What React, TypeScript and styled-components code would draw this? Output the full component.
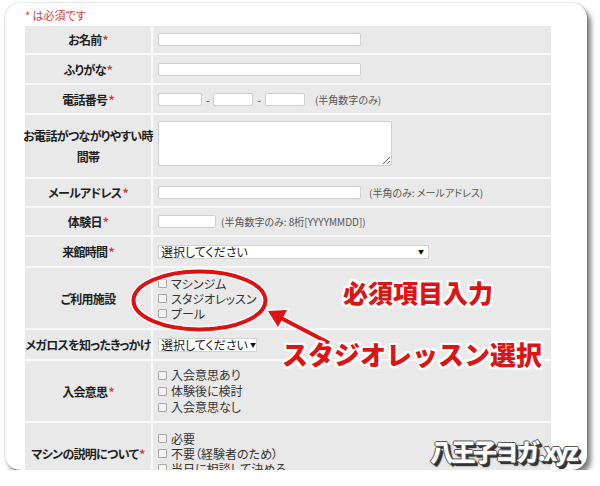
import styled, { createGlobalStyle } from 'styled-components';

const GlobalStyle = createGlobalStyle`
  html, body {
    margin: 0;
    padding: 0;
    background: #fff;
  }
  body {
    font-family: "Noto Sans CJK JP", "Liberation Sans", sans-serif;
    font-feature-settings: "palt";
    color: #333;
  }
`;

const Card = styled.div`
  position: relative;
  margin: 3px 0 0 5px;
  width: 582px;
  height: 467px;
  background: #fff;
  border-radius: 15px;
  overflow: hidden;
  box-shadow: 0 0 2px rgba(0, 0, 0, 0.3), 4px 5px 5px rgba(0, 0, 0, 0.5);
`;

const Inner = styled.div`
  padding: 4px 0 0 20px;
`;

const Note = styled.div`
  color: #d9413c;
  font-size: 11px;
  line-height: 16px;
  height: 19px;
`;

const FormTable = styled.div`
  width: 526px;
  background: #e9e9e9;
`;

const Row = styled.div<{ $h: number }>`
  display: grid;
  grid-template-columns: 128px 1fr;
  height: ${p => p.$h}px;
  box-sizing: border-box;
  border-bottom: 2px solid #f9f9f9;
`;

const Label = styled.div`
  display: flex;
  align-items: center;
  justify-content: center;
  text-align: center;
  border-right: 2px solid #f9f9f9;
  font-size: 12px;
  font-weight: bold;
  letter-spacing: -0.7px;
  line-height: 21px;
  color: #1e1e1e;
  white-space: nowrap;
`;

const Req = styled.span`
  color: #d63a3a;
  margin-left: 1px;
`;

const Cell = styled.div`
  display: flex;
  align-items: center;
  padding-left: 5px;
  font-size: 12px;
`;

const TextInput = styled.input<{ $w: number }>`
  width: ${p => p.$w}px;
  height: 13px;
  box-sizing: border-box;
  border: 1px solid #cfcfcf;
  border-radius: 2px;
  background: #fff;
  padding: 0;
  margin: 0;
`;

const Dash = styled.span`
  font-size: 10px;
  color: #444;
  margin: 0 4px;
`;

const Hint = styled.span<{ $gap: number }>`
  font-size: 10px;
  color: #555;
  margin-left: ${p => p.$gap}px;
  white-space: nowrap;
`;

const TextArea = styled.textarea`
  width: 234px;
  height: 45px;
  box-sizing: border-box;
  border: 1px solid #cfcfcf;
  border-radius: 2px;
  background: #fff;
  margin: 0 0 5px 0;
  padding: 0;
`;

const Select = styled.div<{ $w: number; $spread: boolean }>`
  width: ${p => p.$w}px;
  height: 14px;
  box-sizing: border-box;
  display: flex;
  align-items: center;
  justify-content: ${p => (p.$spread ? 'space-between' : 'flex-start')};
  gap: 2px;
  padding: 0 4px 0 2px;
  border: 1px solid #d4d4d4;
  background: #fff;
  font-size: 12px;
  line-height: 12px;
  color: #222;
  white-space: nowrap;
`;

const Caret = styled.span`
  font-size: 6px;
  color: #111;
`;

const Checks = styled.div<{ $lh: number }>`
  display: flex;
  flex-direction: column;
  line-height: ${p => p.$lh}px;
  font-size: 12px;
  color: #333;
`;

const Check = styled.label`
  display: flex;
  align-items: center;
  gap: 4px;
  white-space: nowrap;

  &::before {
    content: '';
    width: 7px;
    height: 7px;
    border: 1px solid #a8a8a8;
    border-radius: 1px;
    background: #f4f4f4;
  }
`;

const Overlay = styled.svg`
  position: absolute;
  left: 0;
  top: 0;
  pointer-events: none;
`;

const Callout = styled.div<{ $x: number; $y: number; $size: number }>`
  position: absolute;
  left: ${p => p.$x}px;
  top: ${p => p.$y}px;
  font-size: ${p => p.$size}px;
  line-height: 1;
  font-weight: 900;
  font-feature-settings: normal;
  color: #dd1414;
  white-space: nowrap;
  text-shadow: 2px 0 0 #fff, -2px 0 0 #fff, 0 2px 0 #fff, 0 -2px 0 #fff,
    2px 2px 0 #fff, -2px -2px 0 #fff, 2px -2px 0 #fff, -2px 2px 0 #fff,
    0 0 4px rgba(255, 255, 255, 0.9);
`;

const Watermark = styled.div`
  position: absolute;
  left: 425px;
  top: 436px;
  font-size: 24px;
  line-height: 1;
  font-weight: 900;
  letter-spacing: -2.5px;
  color: #fff;
  white-space: nowrap;
  font-feature-settings: normal;
  text-shadow: 1px 0 0 #555, -1px 0 0 #555, 0 1px 0 #555, 0 -1px 0 #555,
    2px 2px 0 #333, 3px 3px 0 #333, 3px 3px 2px rgba(0, 0, 0, 0.5);
`;

const rows: { label: React.ReactNode; h: number; body: React.ReactNode }[] = [
  {
    label: <>お名前<Req>*</Req></>,
    h: 29,
    body: <TextInput $w={203} />,
  },
  {
    label: <>ふりがな<Req>*</Req></>,
    h: 30,
    body: <TextInput $w={203} />,
  },
  {
    label: <>電話番号<Req>*</Req></>,
    h: 30,
    body: (
      <>
        <TextInput $w={44} />
        <Dash>-</Dash>
        <TextInput $w={40} />
        <Dash>-</Dash>
        <TextInput $w={40} />
        <Hint $gap={10}>(半角数字のみ)</Hint>
      </>
    ),
  },
  {
    label: <>お電話がつながりやすい時<br />間帯</>,
    h: 64,
    body: <TextArea />,
  },
  {
    label: <>メールアドレス<Req>*</Req></>,
    h: 29,
    body: (
      <>
        <TextInput $w={203} />
        <Hint $gap={8}>(半角のみ: メールアドレス)</Hint>
      </>
    ),
  },
  {
    label: <>体験日<Req>*</Req></>,
    h: 29,
    body: (
      <>
        <TextInput $w={58} />
        <Hint $gap={5}>(半角数字のみ: 8桁[YYYYMMDD])</Hint>
      </>
    ),
  },
  {
    label: <>来館時間<Req>*</Req></>,
    h: 31,
    body: (
      <Select $w={271} $spread>
        <span>選択してください</span>
        <Caret>▼</Caret>
      </Select>
    ),
  },
  {
    label: <>ご利用施設</>,
    h: 62,
    body: (
      <Checks $lh={15}>
        <Check>マシンジム</Check>
        <Check>スタジオレッスン</Check>
        <Check>プール</Check>
      </Checks>
    ),
  },
  {
    label: <>メガロスを知ったきっかけ</>,
    h: 31,
    body: (
      <Select $w={99} $spread={false}>
        <span>選択してください</span>
        <Caret>▼</Caret>
      </Select>
    ),
  },
  {
    label: <>入会意思<Req>*</Req></>,
    h: 62,
    body: (
      <Checks $lh={16}>
        <Check>入会意思あり</Check>
        <Check>体験後に検討</Check>
        <Check>入会意思なし</Check>
      </Checks>
    ),
  },
  {
    label: <>マシンの説明について<Req>*</Req></>,
    h: 62,
    body: (
      <Checks $lh={15}>
        <Check>必要</Check>
        <Check>不要（経験者のため）</Check>
        <Check>当日に相談して決める</Check>
      </Checks>
    ),
  },
];

export default function App() {
  return (
    <>
      <GlobalStyle />
      <Card>
        <Inner>
          <Note>* は必須です</Note>
          <FormTable>
            {rows.map((r, i) => (
              <Row key={i} $h={r.h}>
                <Label>
                  <span>{r.label}</span>
                </Label>
                <Cell>{r.body}</Cell>
              </Row>
            ))}
          </FormTable>
        </Inner>

        <Overlay width={582} height={467} viewBox="0 0 582 467">
          <ellipse cx={194.5} cy={297.5} rx={66} ry={29} fill="none" stroke="#fff" strokeWidth={7} opacity={0.75} />
          <ellipse cx={194.5} cy={297.5} rx={66} ry={29} fill="none" stroke="#dd1111" strokeWidth={4} />
          <line x1={324} y1={340} x2={274} y2={314} stroke="#fff" strokeWidth={7} opacity={0.75} />
          <polygon points="263,308 282,307 273,324" fill="#fff" stroke="#fff" strokeWidth={3} opacity={0.75} />
          <line x1={324} y1={340} x2={274} y2={314} stroke="#dd1111" strokeWidth={4} />
          <polygon points="263,308 282,307 273,324" fill="#dd1111" />
        </Overlay>

        <Callout $x={338} $y={277} $size={25}>必須項目入力</Callout>
        <Callout $x={277} $y={338} $size={26}>スタジオレッスン選択</Callout>
        <Watermark>八王子ヨガ.xyz</Watermark>
      </Card>
    </>
  );
}
